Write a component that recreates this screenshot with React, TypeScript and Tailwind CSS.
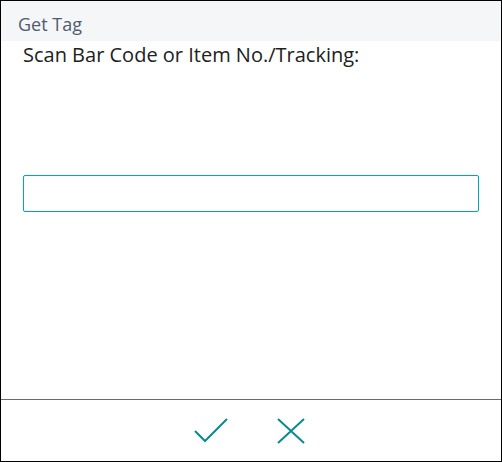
import React, { useState } from 'react';

const App: React.FC = () => {
  const [value, setValue] = useState('');

  return (
    <div className="w-[502px] h-[462px] border border-black bg-white flex flex-col font-['Open_Sans',sans-serif]">
      <div className="h-[40px] bg-[#f5f6f8] flex items-center pl-[17px] pt-[7px] text-[18px] text-[#505c6d]">
        Get Tag
      </div>
      <div className="flex-1 flex flex-col px-[22px]">
        <p className="mt-[1px] text-[20px] leading-[26px] text-[#212121]">Scan Bar Code or Item No./Tracking:</p>
        <input
          className="mt-[107px] w-[456px] h-[37px] border border-[#00a5b8] rounded-[2px] outline-none px-2"
          value={value}
          onChange={(e) => setValue(e.target.value)}
        />
      </div>
      <div className="h-[62px] border-t border-[#6b6b6b] flex items-center justify-center gap-[49px] pr-[4px]">
        <button className="w-[34px] h-[26px] flex items-center justify-center">
          <svg width="34" height="26" viewBox="0 0 34 26" fill="none" stroke="#0a8a8f" strokeWidth="2">
            <path d="M1 13 L11 23 L33 1" />
          </svg>
        </button>
        <button className="w-[28px] h-[26px] flex items-center justify-center">
          <svg width="28" height="26" viewBox="0 0 28 26" fill="none" stroke="#0a8a8f" strokeWidth="2">
            <path d="M1 1 L27 25 M27 1 L1 25" />
          </svg>
        </button>
      </div>
    </div>
  );
};

export default App;
